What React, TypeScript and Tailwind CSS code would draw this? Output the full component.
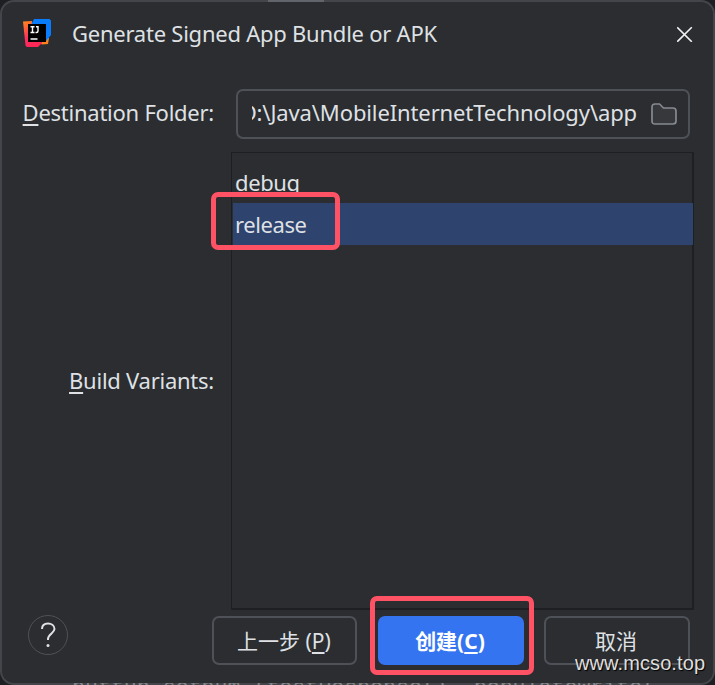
import React from "react";

const ui = "font-['Noto_Sans','Noto_Sans_CJK_SC',sans-serif]";

function Logo() {
  return (
    <svg className="-mt-[2px] ml-[21px] h-7 w-7 shrink-0" viewBox="0 0 28 28">
      <defs>
        <linearGradient id="warm" x1="0" y1="0" x2="0.35" y2="1">
          <stop offset="0" stopColor="#ff8a18" />
          <stop offset="0.65" stopColor="#ff2d63" />
          <stop offset="1" stopColor="#fe2857" />
        </linearGradient>
      </defs>
      <path d="M19 19H26L25 25L19 25.5L15 23Z" fill="#fc801d" />
      <path d="M0 2.5L9 2V20H19V24L15 28H4L2.5 26.5Z" fill="url(#warm)" />
      <path d="M11 0H26.5L28 1.5V16L23 22V5H8.500Z" fill="#087cfa" />
      <path d="M5 5H23V23H5Z" fill="#000" />
      <path d="M7.500 7.700H11.500M9.500 8V13.500M7.500 13.500H11.500M13 7.700H15V12Q15 13.500 13.500 13.500H12.500" stroke="#fff" strokeWidth="1.400" fill="none" />
      <path d="M7.500 20H14.500" stroke="#fff" strokeWidth="1.500" />
    </svg>
  );
}

function Label({ first, rest }: { first: string; rest: string }) {
  return (
    <span className="inline-block whitespace-pre tracking-[-0.25px]">
      <span className="underline decoration-2 underline-offset-[3px]">{first}</span>
      {rest}
    </span>
  );
}

export default function App() {
  return (
    <div className={`relative h-[685px] w-[715px] overflow-hidden bg-[#1e1f22] text-[22px] leading-[30px] text-[#dfe1e5] ${ui}`}>
      <div className="relative flex h-[685px] w-[715px] flex-col rounded-[14px] border-2 border-[#43454a] bg-[#2b2d30]">
        <header className="flex h-[64px] shrink-0 items-center">
          <Logo />
          <h1 className="-mt-[2px] ml-[21px] whitespace-nowrap tracking-[-0.24px]">Generate Signed App Bundle or APK</h1>
          <svg className="mr-[20px] ml-auto h-4 w-4" viewBox="0 0 16 16" fill="none" stroke="#f0f1f2" strokeWidth="1.600">
            <path d="M.2 1.200L14.800 15.800M14.800 1.200L.2 15.800" />
          </svg>
        </header>
        <div className="mt-[23px] flex h-[50px] shrink-0 items-center">
          <div className="-mt-[5px] flex w-[212px] justify-end"><Label first="D" rest="estination Folder:" /></div>
          <div className="ml-[22px] flex h-[50px] w-[454px] items-center rounded-[7px] border-2 border-[#4e5157] pl-[14px]">
            <div className="-mt-[5px] flex h-[34px] w-[385px] items-center justify-end overflow-hidden whitespace-nowrap tracking-[-0.12px]">D:\Java\MobileInternetTechnology\app</div>
            <svg className="ml-[14px] h-[22px] w-[26px]" viewBox="0 0 26 22" fill="#36383c" stroke="#868a91" strokeWidth="1.700">
              <path d="M1 4Q1 1 4 1H8.500L12.500 5H22Q25 5 25 8V18Q25 21 22 21H4Q1 21 1 18Z" />
            </svg>
          </div>
        </div>
        <div className="mt-[13px] flex h-[458px] shrink-0">
          <div className="flex w-[212px] items-center justify-end pb-[2px]"><Label first="B" rest="uild Variants:" /></div>
          <ul className="ml-[17px] w-[463px] border border-r-2 border-b-2 border-[#1e1f22] pt-[8px] tracking-[-0.4px]">
            <li className="flex h-[42px] items-center pl-[3px]">debug</li>
            <li className="-mr-px ml-px flex h-[42px] items-center bg-[#2e436e] pl-[2px]">release</li>
          </ul>
        </div>
        <footer className="mt-[6px] flex h-[49px] shrink-0 items-start">
          <button className="-mt-px ml-[25.5px] grid h-10 w-10 place-items-center rounded-full border-[1.5px] border-[#4e5157]">
            <svg className="h-[26px] w-4" viewBox="0 0 16 26" fill="none" stroke="#dfe1e5" strokeWidth="2">
              <path d="M2 7C2 3.500 4.500 1.500 8 1.500S14.500 3.500 14.500 7C14.500 11 8 12 8 17V18" />
              <circle cx="8" cy="23.500" r="1.500" fill="#dfe1e5" stroke="none" />
            </svg>
          </button>
          <button className="ml-[144.5px] h-[49px] w-[145px] whitespace-pre rounded-[7px] border-2 border-[#4e5157] pr-[1px] text-[21px]">上一步 (<span className="underline decoration-2 underline-offset-[3px]">P</span>)</button>
          <button className="ml-[21px] h-[49px] w-[146px] rounded-[7px] bg-[#3574f0] pr-[2px] text-[21px] font-bold text-white">创建(<span className="underline decoration-2 underline-offset-[3px]">C</span>)</button>
          <button className="ml-[20px] h-[49px] w-[146px] rounded-[7px] border-2 border-[#4e5157] pr-[2px] text-[21px]">取消</button>
        </footer>
      </div>
      <div className="absolute top-0 left-[268px] h-[2px] w-14 bg-[#62646b]" />
      <div className="absolute top-[683px] left-[72px] h-[2px] w-[605px] overflow-hidden">
        <div className="-mt-[7px] whitespace-pre font-['Liberation_Mono',monospace] text-[21.600px] leading-6 text-[#858689]">
          nuttun setnum (testResponse(), populateWrite(, 3)
        </div>
      </div>
      <div className="absolute top-[192px] left-[211px] h-[58px] w-[129px] rounded-[7px] border-[5px] border-[#ff5265]" />
      <div className="absolute top-[596px] left-[370px] h-[79px] w-[164px] rounded-[7px] border-[5px] border-[#ff5265]" />
      <div className="absolute top-[651px] left-[575px] whitespace-nowrap font-['Liberation_Sans',sans-serif] text-[20px] leading-6 tracking-[0.1px] text-[#dedede] [text-shadow:1px_1px_1px_#000]">www.mcso.top</div>
    </div>
  );
}
